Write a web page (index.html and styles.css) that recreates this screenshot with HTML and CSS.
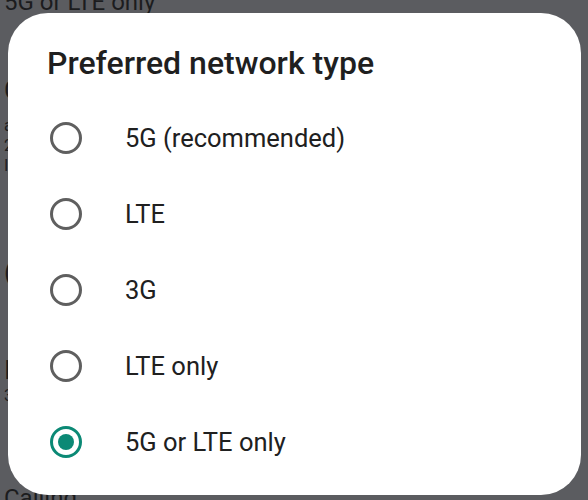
FILE: index.html
```html
<!DOCTYPE html>
<html lang="en">
<head>
	<meta charset="UTF-8">
	<title>Preferred network type</title>
	<link rel="stylesheet" href="styles.css">
</head>
<body>
	<div class="settings">
		<div class="item top">5G or LTE only</div>
		<div class="item head">Calls</div>
		<div class="item small first">a</div>
		<div class="item small">2</div>
		<div class="item small">I</div>
		<div class="item head h2">(</div>
		<div class="item head h3">I</div>
		<div class="item small">3</div>
		<div class="item bottom">Calling</div>
	</div>

	<div class="dialog">
		<h2 class="title">Preferred network type</h2>
		<ul class="options">
			<li class="option"><span class="radio"></span><span class="label">5G (recommended)</span></li>
			<li class="option"><span class="radio"></span><span class="label">LTE</span></li>
			<li class="option"><span class="radio"></span><span class="label">3G</span></li>
			<li class="option"><span class="radio"></span><span class="label">LTE only</span></li>
			<li class="option checked"><span class="radio"></span><span class="label">5G or LTE only</span></li>
		</ul>
	</div>
</body>
</html>
```

FILE: styles.css
```css
html, body {
	margin: 0;
	height: 100%;
	overflow: hidden;
}
body {
	background-color: #5b5c60;
	font-family: Roboto, "Noto Sans", sans-serif;
	position: relative;
}
.settings {
	padding-left: 4px;
	color: #1c1c1e;
}
.item {
	font-size: 22px;
	line-height: 26px;
}
.item.top {
	margin-top: -12px;
	font-size: 24px;
	line-height: 28px;
}
.item.head {
	margin-top: 58px;
	font-size: 26px;
	line-height: 32px;
}
.item.small {
	font-size: 16px;
	line-height: 20px;
}
.item.small.first {
	margin-top: 10px;
}
.item.h2 {
	margin-top: 80px;
}
.item.h3 {
	margin-top: 66px;
}
.item.bottom {
	position: absolute;
	left: 4px;
	top: 484px;
	font-size: 24px;
	line-height: 28px;
}
.dialog {
	position: absolute;
	left: 8px;
	top: 13px;
	width: 573px;
	height: 482px;
	box-sizing: border-box;
	background-color: #fff;
	border-radius: 40px;
	padding: 30px 0 15px 0;
}
.title {
	margin: 0 0 17px 39px;
	font-size: 32px;
	line-height: 40px;
	font-weight: 500;
	color: #1f1f1f;
}
.options {
	list-style: none;
	margin: 0;
	padding: 0;
}
.option {
	display: flex;
	align-items: center;
	height: 76px;
	padding-left: 42px;
}
.radio {
	width: 32px;
	height: 32px;
	box-sizing: border-box;
	border: 3px solid #5f5f5f;
	border-radius: 50%;
	margin-right: 43px;
	display: flex;
	align-items: center;
	justify-content: center;
}
.option.checked .radio {
	border-color: #0b8975;
}
.option.checked .radio::after {
	content: "";
	width: 16px;
	height: 16px;
	border-radius: 50%;
	background-color: #0b8975;
}
.label {
	font-size: 25.5px;
	color: #202020;
}
```
